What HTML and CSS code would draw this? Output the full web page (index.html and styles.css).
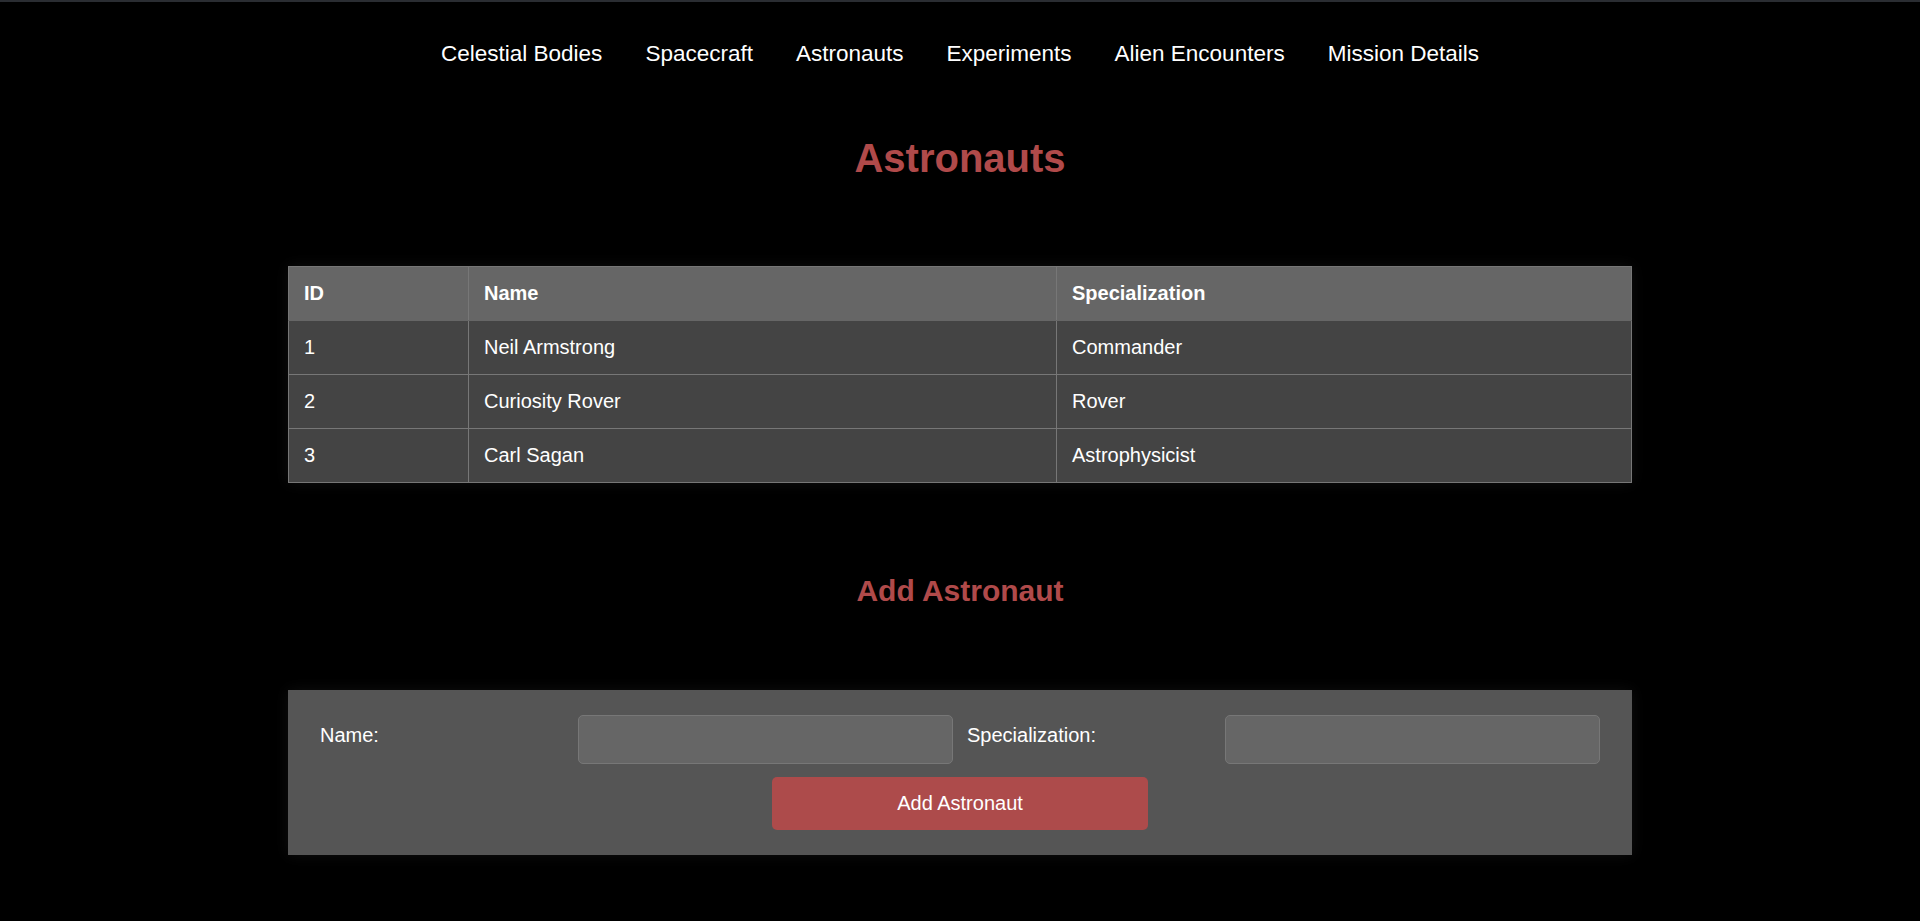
FILE: index.html
```html
<!DOCTYPE html>
<html lang="en">
<head>
<meta charset="utf-8">
<title>Astronauts</title>
<link rel="stylesheet" href="styles.css">
</head>
<body>
<div class="topbar"></div>
<nav class="nav">
  <a href="#">Celestial Bodies</a>
  <a href="#">Spacecraft</a>
  <a href="#">Astronauts</a>
  <a href="#">Experiments</a>
  <a href="#">Alien Encounters</a>
  <a href="#">Mission Details</a>
</nav>
<main class="main">
  <h1 class="title">Astronauts</h1>
  <table class="data">
    <thead>
      <tr><th class="c-id">ID</th><th class="c-name">Name</th><th>Specialization</th></tr>
    </thead>
    <tbody>
      <tr><td>1</td><td>Neil Armstrong</td><td>Commander</td></tr>
      <tr><td>2</td><td>Curiosity Rover</td><td>Rover</td></tr>
      <tr><td>3</td><td>Carl Sagan</td><td>Astrophysicist</td></tr>
    </tbody>
  </table>
  <h2 class="subtitle">Add Astronaut</h2>
  <form class="form">
    <div class="fields">
      <div class="pair">
        <label class="label" for="name">Name:</label>
        <input class="input" id="name" type="text">
      </div>
      <div class="pair">
        <label class="label" for="spec">Specialization:</label>
        <input class="input" id="spec" type="text">
      </div>
    </div>
    <button class="btn" type="button">Add Astronaut</button>
  </form>
</main>
</body>
</html>
```
FILE: styles.css
```css
* { box-sizing: border-box; }
html, body { margin: 0; padding: 0; }
body {
  background: #000;
  color: #fff;
  font-family: "Liberation Sans", Arial, sans-serif;
  font-size: 20px;
  min-height: 921px;
}
.topbar { height: 2px; background: #2a2d32; }
.nav {
  display: flex;
  justify-content: center;
  gap: 43px;
  padding-top: 39px;
}
.nav a {
  color: #fff;
  text-decoration: none;
  font-size: 22.5px;
  line-height: 25px;
}
.main {
  width: 1344px;
  margin: 0 auto;
  display: flex;
  flex-direction: column;
}
.title {
  margin: 70px 0 0;
  text-align: center;
  color: #b04a4a;
  font-size: 40px;
  line-height: 45px;
  font-weight: bold;
}
.data {
  margin-top: 85px;
  width: 100%;
  border-collapse: collapse;
  background: #444;
  box-shadow: 0 0 14px rgba(255, 255, 255, 0.06);
}
.data th, .data td {
  border: 1px solid #777;
  padding: 15px 15px;
  line-height: 23px;
  text-align: left;
  font-size: 20px;
}
.data th { background: #666; font-weight: bold; }
.data thead th { border-bottom-color: #666; }
.c-id { width: 180px; }
.c-name { width: 588px; }
.subtitle {
  margin: 91px 0 0;
  text-align: center;
  color: #b04a4a;
  font-size: 30px;
  line-height: 34px;
  font-weight: bold;
}
.form {
  margin-top: 82px;
  background: #555;
  padding: 25px 32px;
  display: flex;
  flex-direction: column;
  align-items: center;
  box-shadow: 0 0 14px rgba(255, 255, 255, 0.06);
}
.fields {
  width: 100%;
  display: flex;
  gap: 14px;
}
.pair { flex: 1; display: flex; }
.label {
  flex: 0 0 258px;
  padding-top: 9px;
  line-height: 22px;
  font-size: 20px;
}
.input {
  flex: 1;
  height: 49px;
  background: #666;
  border: 1px solid #777;
  border-radius: 5px;
  color: #fff;
  font-size: 20px;
  padding: 0 10px;
}
.btn {
  margin-top: 13px;
  width: 376px;
  height: 53px;
  background: #ad4b4b;
  color: #fff;
  border: none;
  border-radius: 5px;
  font-family: "Liberation Sans", Arial, sans-serif;
  font-size: 20px;
}
```
